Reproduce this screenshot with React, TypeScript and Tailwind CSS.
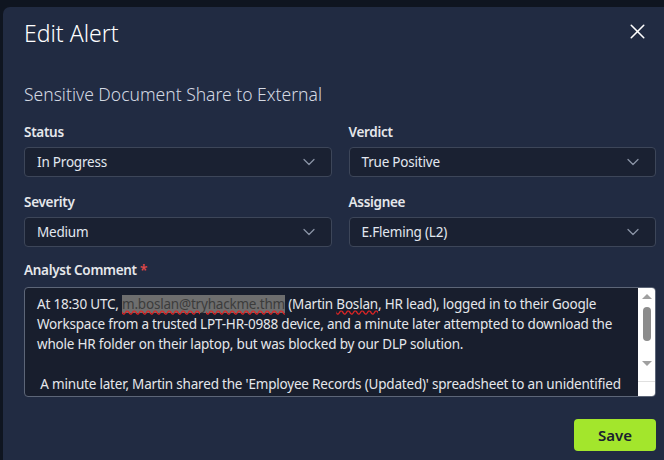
import { X, ChevronDown } from "lucide-react";

const font = { fontFamily: '"Segoe UI", "Noto Sans", sans-serif' };

function Select({ value }: { value: string }) {
  return (
    <div className="flex h-[30px] items-center justify-between rounded-[4px] border border-[#3d4659] bg-[#1a2132] pl-[12px] pr-[12px] text-[13.5px] tracking-[-0.2px] text-[#e2e8f0]">
      <span>{value}</span>
      <ChevronDown className="h-[20px] w-[20px] text-[#8a93a6]" strokeWidth={1.5} />
    </div>
  );
}

function Field({ label, value }: { label: string; value: string }) {
  return (
    <div className="flex flex-col gap-[6px]">
      <label className="text-[13.5px] font-semibold leading-[18px] tracking-[-0.3px] text-[#e5e7eb]">{label}</label>
      <Select value={value} />
    </div>
  );
}

export default function App() {
  return (
    <div style={font} className="relative h-[460px] w-[664px] overflow-hidden bg-[#0f1520]">
      <div className="ml-[3px] mt-[7px] h-[480px] w-[680px] rounded-[7px] bg-[#212b42] px-[21px]">
        <div className="flex items-start justify-between pt-[10px]">
          <h1 className="text-[23px] font-light leading-[32px] text-white">Edit Alert</h1>
          <X className="mr-[12px] mt-[2px] h-[25px] w-[25px] text-white" strokeWidth={1.5} />
        </div>

        <h2 className="mt-[34px] text-[17.5px] font-light leading-[22px] text-[#d4d9e2]">
          Sensitive Document Share to External
        </h2>

        <div className="mt-[18px] grid w-[632px] grid-cols-2 gap-x-[17px] gap-y-[16px]">
          <Field label="Status" value="In Progress" />
          <Field label="Verdict" value="True Positive" />
          <Field label="Severity" value="Medium" />
          <Field label="Assignee" value="E.Fleming (L2)" />
        </div>

        <div className="mt-[10px] w-[632px]">
          <label className="text-[13.5px] font-semibold leading-[18px] tracking-[-0.3px] text-[#e5e7eb]">
            Analyst Comment <span className="text-[#e04848]">*</span>
          </label>
          <div className="mt-[6px] flex h-[110px] overflow-hidden rounded-[4px] border border-[#5d6678] bg-[#181e2d]">
            <div className="min-w-0 flex-1 overflow-hidden whitespace-nowrap pl-[12px] pt-[6px] text-[13.5px] leading-[20px] tracking-[-0.2px] text-[#e5e7eb]">
              <div>
                At 18:30 UTC,{" "}
                <span className="bg-[#6e6e6e] text-[#3c3c3c] underline decoration-[#e02424] decoration-wavy">
                  m.boslan@tryhackme.thm
                </span>{" "}
                (Martin <span className="underline decoration-[#e02424] decoration-wavy">Boslan</span>, HR lead), logged in to their Google
              </div>
              <div>Workspace from a trusted LPT-HR-0988 device, and a minute later attempted to download the</div>
              <div>whole HR folder on their laptop, but was blocked by our DLP solution.</div>
              <div>&nbsp;</div>
              <div>&nbsp;A minute later, Martin shared the 'Employee Records (Updated)' spreadsheet to an unidentified</div>
            </div>
            <div className="flex w-[17px] shrink-0 flex-col items-center bg-white">
              <div className="mt-[6px] h-0 w-0 border-x-[5px] border-b-[5px] border-x-transparent border-b-[#a0a0a0]" />
              <div className="mt-[8px] h-[34px] w-[8px] rounded-full bg-[#8c8c8c]" />
              <div className="mt-[20px] h-0 w-0 border-x-[5px] border-t-[5px] border-x-transparent border-t-[#a0a0a0]" />
              <div className="mt-auto h-[15px] w-full border-t border-[#e0e0e0]" />
            </div>
          </div>
        </div>

        <div className="mt-[22px] flex w-[632px] justify-end">
          <button className="h-[32px] w-[82px] rounded-[4px] bg-[#a3e62c] text-[15px] font-semibold text-[#1a2030]">
            Save
          </button>
        </div>
      </div>
    </div>
  );
}
